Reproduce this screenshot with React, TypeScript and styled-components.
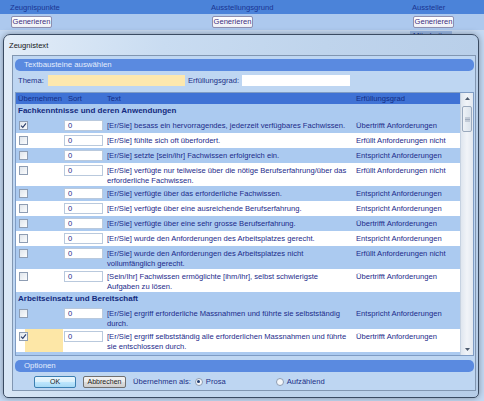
import React from "react";
import styled, { createGlobalStyle } from "styled-components";

type Entry = { text: string; grad: string; checked?: boolean; marked?: boolean };
type Group = { title: string; entries: Entry[] };

const groups: Group[] = [
  {
    title: "Fachkenntnisse und deren Anwendungen",
    entries: [
      { checked: true, text: "[Er/Sie] besass ein hervorragendes, jederzeit verfügbares Fachwissen.", grad: "Übertrifft Anforderungen" },
      { text: "[Er/Sie] fühlte sich oft überfordert.", grad: "Erfüllt Anforderungen nicht" },
      { text: "[Er/Sie] setzte [sein/ihr] Fachwissen erfolgreich ein.", grad: "Entspricht Anforderungen" },
      { text: "[Er/Sie] verfügte nur teilweise über die nötige Berufserfahrung/über das erforderliche Fachwissen.", grad: "Erfüllt Anforderungen nicht" },
      { text: "[Er/Sie] verfügte über das erforderliche Fachwissen.", grad: "Entspricht Anforderungen" },
      { text: "[Er/Sie] verfügte über eine ausreichende Berufserfahrung.", grad: "Entspricht Anforderungen" },
      { text: "[Er/Sie] verfügte über eine sehr grosse Berufserfahrung.", grad: "Übertrifft Anforderungen" },
      { text: "[Er/Sie] wurde den Anforderungen des Arbeitsplatzes gerecht.", grad: "Entspricht Anforderungen" },
      { text: "[Er/Sie] wurde den Anforderungen des Arbeitsplatzes nicht vollumfänglich gerecht.", grad: "Erfüllt Anforderungen nicht" },
      { text: "[Sein/Ihr] Fachwissen ermöglichte [ihm/ihr], selbst schwierigste\nAufgaben zu lösen.", grad: "Übertrifft Anforderungen" },
    ],
  },
  {
    title: "Arbeitseinsatz und Bereitschaft",
    entries: [
      { text: "[Er/Sie] ergriff erforderliche Massnahmen und führte sie selbstständig durch.", grad: "Entspricht Anforderungen" },
      { checked: true, marked: true, text: "[Er/Sie] ergriff selbstständig alle erforderlichen Massnahmen und führte sie entschlossen durch.", grad: "Übertrifft Anforderungen" },
    ],
  },
];

const GlobalStyle = createGlobalStyle`
  html, body { margin: 0; padding: 0; }
  body {
    font-family: "Liberation Sans", Arial, sans-serif;
    font-size: 7.6px;
    background: #c4d9f3;
    width: 484px;
    height: 401px;
    overflow: hidden;
  }
`;

const Page = styled.div`
  position: relative;
  width: 484px;
  height: 401px;
  overflow: hidden;
`;

const TopHeader = styled.div`
  display: flex;
  height: 14px;
  background: #4b83d9;
  color: #1a3592;
`;

const TopCol = styled.div`
  flex: 0 0 201px;
  box-sizing: border-box;
  padding-left: 10px;
  line-height: 15px;
  &:last-child {
    flex: 1 1 auto;
    min-width: 0;
  }
`;

const TopButtons = styled.div`
  display: flex;
  height: 16px;
  background: #adc9ee;
  border-bottom: 1px solid #c8d9ef;
`;

const TopButtonCell = styled.div`
  flex: 0 0 201px;
  box-sizing: border-box;
  padding: 2px 0 0 11px;
  &:last-child {
    flex: 1 1 auto;
    min-width: 0;
  }
`;

const SmallButton = styled.div`
  width: 39px;
  height: 10px;
  line-height: 10px;
  text-align: center;
  border: 1px solid #8d8fb0;
  border-radius: 2px;
  background: linear-gradient(#ffffff, #eef0f6);
  color: #3b2f7c;
`;

const BackRow = styled.div`
  display: flex;
  height: 8px;
`;

const BackTag = styled.div`
  margin-left: 410px;
  padding: 0 3px;
  background: #9ab8e4;
  color: #1a3592;
  line-height: 9px;
`;

const Dialog = styled.div`
  position: absolute;
  left: 3px;
  top: 34px;
  width: 476px;
  height: 364px;
  box-sizing: border-box;
  border: 1px solid #3a4b62;
  border-radius: 7px 7px 5px 5px;
  background: linear-gradient(100deg, #e3edf8 0%, #c9dcf1 30%, #bfd4ec 60%, #b6cde8 100%);
  box-shadow: 0 0 6px rgba(0, 0, 0, 0.35);
  display: flex;
  flex-direction: column;
`;

const Title = styled.div`
  height: 20px;
  padding-left: 5px;
  line-height: 21px;
  color: #151515;
`;

const Client = styled.div`
  flex: 1;
  margin: 0 2px 6px 8px;
  border: 1px solid #8196b1;
  background: #bed6f2;
  padding: 3px 1px 2px 2px;
  display: flex;
  flex-direction: column;
`;

const GroupBar = styled.div`
  height: 12px;
  line-height: 12px;
  border-radius: 5px;
  background: #5a8ae0;
  color: #e4edfc;
  padding-left: 9px;
  font-size: 7.8px;
`;

const ThemaRow = styled.div`
  display: flex;
  align-items: center;
  height: 12px;
  margin-top: 3px;
  color: #1c2f86;
`;

const Label = styled.span<{ $w: number; $pad: number }>`
  width: ${(p) => p.$w}px;
  padding-left: ${(p) => p.$pad}px;
  box-sizing: border-box;
`;

const Field = styled.div<{ $w: number; $bg: string }>`
  width: ${(p) => p.$w}px;
  height: 11px;
  background: ${(p) => p.$bg};
`;

const Table = styled.div`
  display: flex;
  height: 264px;
  margin-top: 6px;
  border: 1px solid #7f9cc4;
  background: #abcaf0;
  box-sizing: border-box;
`;

const TableMain = styled.div`
  flex: 1;
  overflow: hidden;
`;

const cols = "47px 43px 247px 1fr";

const HeadRow = styled.div`
  display: grid;
  grid-template-columns: ${cols};
  height: 11px;
  background: #3f72d5;
  color: #132d85;
  line-height: 11px;
`;

const HeadCell = styled.div<{ $pad: number }>`
  padding-left: ${(p) => p.$pad}px;
`;

const GroupRow = styled.div`
  height: 14px;
  line-height: 14px;
  padding-left: 2px;
  font-weight: bold;
  font-size: 8px;
  color: #142a7e;
  background: #abcaf0;
`;

const Row = styled.div<{ $alt: boolean }>`
  display: grid;
  grid-template-columns: ${cols};
  min-height: 15px;
  background: ${(p) => (p.$alt ? "#abcaf0" : "#ffffff")};
  color: #1c2a8a;
`;

const CheckCell = styled.div<{ $marked?: boolean }>`
  padding: 3px 0 0 3px;
  background: ${(p) => (p.$marked ? "linear-gradient(90deg, transparent 9px, #fde7a7 9px)" : "transparent")};
`;

const Box = styled.div`
  width: 7px;
  height: 7px;
  border: 1px solid #8e9db3;
  background: linear-gradient(135deg, #dfe5ec, #fbfcfd);
  display: flex;
  align-items: center;
  justify-content: center;
`;

const SortCell = styled.div`
  padding: 2px 0 0 1px;
`;

const SortInput = styled.div`
  width: 39px;
  height: 11px;
  box-sizing: border-box;
  border: 1px solid #b9c9dd;
  background: #ffffff;
  padding-left: 3px;
  line-height: 10px;
`;

const TextCell = styled.div`
  padding: 3px 3px 1px 1px;
  line-height: 9.5px;
  white-space: pre-line;
`;

const GradCell = styled.div`
  padding: 3px 2px 1px 3px;
  line-height: 9.5px;
`;

const Scroll = styled.div`
  width: 12px;
  border-left: 1px solid #c6d2e1;
  background: linear-gradient(90deg, #dfe6ef, #f1f4f8 50%, #e2e8f0);
  display: flex;
  flex-direction: column;
  justify-content: space-between;
`;

const Arrow = styled.div`
  height: 11px;
  display: flex;
  align-items: center;
  justify-content: center;
`;

const Thumb = styled.div`
  height: 24px;
  margin: 2px 1px 0;
  border: 1px solid #9aa9bd;
  border-radius: 2px;
  background: linear-gradient(90deg, #eef2f7, #dbe3ec);
  display: flex;
  align-items: center;
  justify-content: center;
`;

const ScrollTop = styled.div``;

const OptionsBar = styled(GroupBar)`
  margin-top: 4px;
`;

const Buttons = styled.div`
  display: flex;
  align-items: center;
  height: 13px;
  margin-top: 3px;
  padding-left: 19px;
  color: #1c2f86;
`;

const Button = styled.div<{ $def?: boolean; $w: number }>`
  width: ${(p) => p.$w}px;
  height: 12px;
  box-sizing: border-box;
  margin-right: 7px;
  line-height: 10px;
  text-align: center;
  font-size: 7px;
  color: #1a1a1a;
  border: 1px solid ${(p) => (p.$def ? "#3c7fb1" : "#707070")};
  border-radius: 2px;
  background: ${(p) =>
    p.$def ? "linear-gradient(#eaf6fd, #d9f0fc 50%, #bee6fd 51%, #a7d9f5)" : "linear-gradient(#f2f2f2, #ebebeb 50%, #dddddd 51%, #cfcfcf)"};
`;

const RadioLabel = styled.div<{ $ml: number }>`
  display: flex;
  align-items: center;
  margin-left: ${(p) => p.$ml}px;
  gap: 3px;
`;

const Radio = styled.div<{ $on?: boolean }>`
  width: 6px;
  height: 6px;
  border-radius: 50%;
  border: 1px solid #8e9db3;
  background: #f4f6f9;
  display: flex;
  align-items: center;
  justify-content: center;
  &::after {
    content: "";
    width: 3px;
    height: 3px;
    border-radius: 50%;
    background: ${(p) => (p.$on ? "#1f3c70" : "transparent")};
  }
`;

const Check = () => (
  <svg width="7" height="7" viewBox="0 0 7 7">
    <path d="M1 3.6 L2.8 5.4 L6 1.3" fill="none" stroke="#2a3d6a" strokeWidth="1.1" />
  </svg>
);

export default function App() {
  return (
    <Page>
      <GlobalStyle />
      <TopHeader>
        <TopCol>Zeugnispunkte</TopCol>
        <TopCol>Ausstellungsgrund</TopCol>
        <TopCol>Aussteller</TopCol>
      </TopHeader>
      <TopButtons>
        <TopButtonCell><SmallButton>Generieren</SmallButton></TopButtonCell>
        <TopButtonCell><SmallButton>Generieren</SmallButton></TopButtonCell>
        <TopButtonCell><SmallButton>Generieren</SmallButton></TopButtonCell>
      </TopButtons>
      <BackRow>
        <BackTag>Mitarbeiter</BackTag>
      </BackRow>

      <Dialog>
        <Title>Zeugnistext</Title>
        <Client>
          <GroupBar>Textbausteine auswählen</GroupBar>
          <ThemaRow>
            <Label $w={33} $pad={3}>Thema:</Label>
            <Field $w={137} $bg="#fde8ae" />
            <Label $w={57} $pad={3}>Erfüllungsgrad:</Label>
            <Field $w={108} $bg="#ffffff" />
          </ThemaRow>

          <Table>
            <TableMain>
              <HeadRow>
                <HeadCell $pad={2}>Übernehmen</HeadCell>
                <HeadCell $pad={5}>Sort</HeadCell>
                <HeadCell $pad={1}>Text</HeadCell>
                <HeadCell $pad={3}>Erfüllungsgrad</HeadCell>
              </HeadRow>
              {groups.map((g) => (
                <React.Fragment key={g.title}>
                  <GroupRow>{g.title}</GroupRow>
                  {g.entries.map((e, i) => (
                    <Row key={e.text} $alt={i % 2 === 0}>
                      <CheckCell $marked={e.marked}>
                        <Box>{e.checked && <Check />}</Box>
                      </CheckCell>
                      <SortCell>
                        <SortInput>0</SortInput>
                      </SortCell>
                      <TextCell>{e.text}</TextCell>
                      <GradCell>{e.grad}</GradCell>
                    </Row>
                  ))}
                </React.Fragment>
              ))}
            </TableMain>
            <Scroll>
              <ScrollTop>
                <Arrow>
                  <svg width="5" height="3" viewBox="0 0 5 3"><path d="M0 3 L2.5 0 L5 3 Z" fill="#4d5b6e" /></svg>
                </Arrow>
                <Thumb>
                  <svg width="5" height="5" viewBox="0 0 5 5">
                    <path d="M0 1h5M0 2.5h5M0 4h5" stroke="#8f9cb0" strokeWidth="0.8" />
                  </svg>
                </Thumb>
              </ScrollTop>
              <Arrow>
                <svg width="5" height="3" viewBox="0 0 5 3"><path d="M0 0 L2.5 3 L5 0 Z" fill="#4d5b6e" /></svg>
              </Arrow>
            </Scroll>
          </Table>

          <OptionsBar>Optionen</OptionsBar>
          <Buttons>
            <Button $def $w={42}>OK</Button>
            <Button $w={43}>Abbrechen</Button>
            <span>Übernehmen als:</span>
            <RadioLabel $ml={4}>
              <Radio $on />
              Prosa
            </RadioLabel>
            <RadioLabel $ml={50}>
              <Radio />
              Aufzählend
            </RadioLabel>
          </Buttons>
        </Client>
      </Dialog>
    </Page>
  );
}
